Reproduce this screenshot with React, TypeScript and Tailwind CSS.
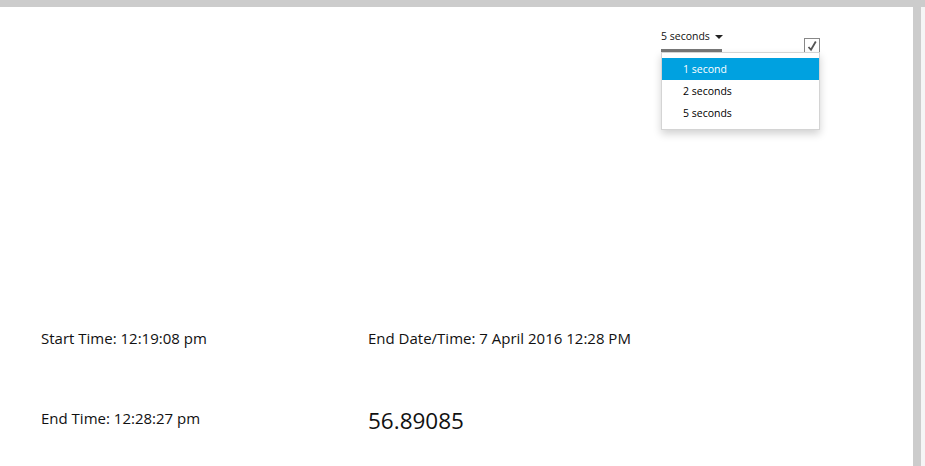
import { useState } from 'react'

const options = ['1 second', '2 seconds', '5 seconds']

export default function App() {
  const [selected] = useState('1 second')

  return (
    <div
      className="h-[466px] w-[925px] overflow-hidden bg-[#cccccc] pt-[7px]"
      style={{ fontFamily: '"Open Sans", "Noto Sans", sans-serif' }}
    >
      <div className="flex h-full">
        <div className="relative h-full w-[913px] bg-white">
          {/* Refresh interval picker */}
          <div className="flex justify-end pr-[93px] pt-[22px]">
            <div className="relative w-[159px]">
              <div className="flex items-start justify-between">
                <div className="w-[61px]">
                  <div className="flex items-center gap-[5px] whitespace-nowrap text-[10.5px] leading-[14px] text-[#111]">
                    <span>5 seconds</span>
                    <svg width="8" height="4" viewBox="0 0 8 4" className="mt-[2px] shrink-0">
                      <path d="M0 0 L8 0 L4 4 Z" fill="#222" />
                    </svg>
                  </div>
                  <div className="mt-[6px] h-[3px] w-[61px] bg-[#777]" />
                </div>
                <div className="mt-[9px] flex h-[16px] w-[16px] items-center justify-center border border-[#888] bg-white">
                  <svg width="12" height="12" viewBox="0 0 12 12">
                    <path d="M2.5 7 L5 9.8 L9.8 1.5" fill="none" stroke="#555" strokeWidth="1.8" />
                  </svg>
                </div>
              </div>

              {/* Open list */}
              <div className="absolute left-0 top-[23px] w-[159px] border border-[#d4d4d4] bg-white py-[5px] shadow-[0_4px_8px_rgba(0,0,0,0.18)]">
                {options.map(o => (
                  <div
                    key={o}
                    className={`h-[22px] pl-[21px] text-[10.5px] leading-[22px] ${
                      o === selected ? 'bg-[#00a1e0] text-white' : 'text-black'
                    }`}
                  >
                    {o}
                  </div>
                ))}
              </div>
            </div>
          </div>

          {/* Times */}
          <div className="mt-[274px] grid grid-cols-[327px_1fr] pl-[41px] text-[15px] text-[#111]">
            <div className="h-[80px] leading-[20px]">Start Time: 12:19:08 pm</div>
            <div className="h-[80px] leading-[20px]">End Date/Time: 7 April 2016 12:28 PM</div>
            <div className="leading-[20px]">End Time: 12:28:27 pm</div>
            <div className="mt-[-2px] text-[22.5px] leading-[30px]">56.89085</div>
          </div>
        </div>
        <div className="w-[8px]" />
        <div className="h-full w-[4px] bg-[#f5f5f5]" />
      </div>
    </div>
  )
}
